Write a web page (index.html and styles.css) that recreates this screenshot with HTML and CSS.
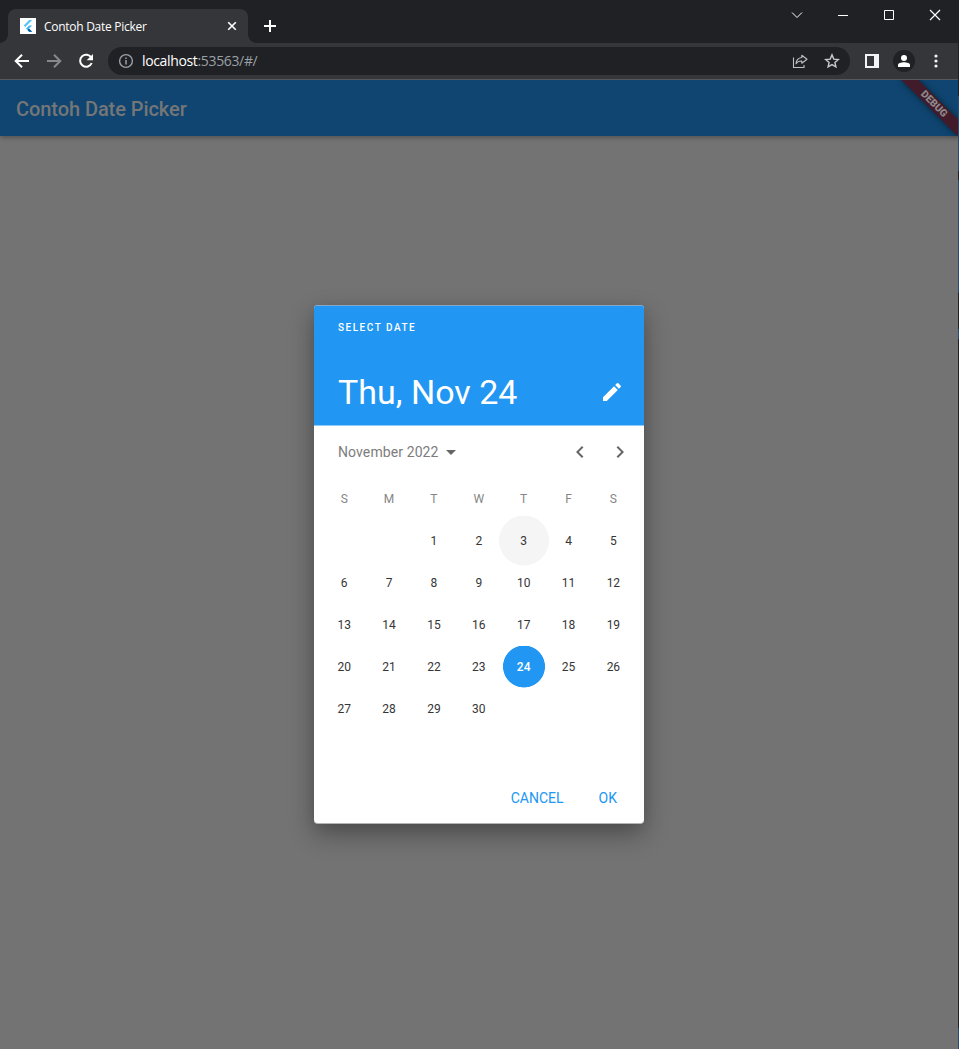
FILE: index.html
```html
<!DOCTYPE html>
<html lang="en">
<head>
<meta charset="utf-8">
<title>Contoh Date Picker</title>
<link rel="stylesheet" href="styles.css">
</head>
<body>
<div class="window">
  <header class="tabstrip">
    <div class="tab">
      <svg class="favicon" width="16" height="16" viewBox="0 0 16 16"><rect width="16" height="16" fill="#fff"/><path d="M9.2 2h3L5.3 9 3.7 7.6z" fill="#54c5f8"/><path d="M9.2 7.4h3L9 10.6l3.2 3.2h-3L6 10.6z" fill="#40b6f5"/><path d="M7.6 12.2 9.1 10.7l3.1 3.1h-3z" fill="#01579b"/></svg>
      <span class="tab-title">Contoh Date Picker</span>
      <svg class="tab-close" width="10" height="10" viewBox="0 0 10 10"><path d="m1.2 1.2 7.6 7.6m0-7.6L1.2 8.8" stroke="#fff" stroke-width="1.6"/></svg>
    </div>
    <svg class="new-tab" width="12" height="12" viewBox="0 0 12 12"><path d="M6 0v12M0 6h12" stroke="#fff" stroke-width="2"/></svg>
    <div class="controls">
      <svg width="46" height="30"><path d="m18 12.500 5 5 5-5" fill="none" stroke="#fff"/></svg>
      <svg width="46" height="30"><path d="M18 15.500h10" stroke="#fff"/></svg>
      <svg width="46" height="30"><path d="M18.500 10.500h9v9h-9z" fill="none" stroke="#fff"/></svg>
      <svg width="46" height="30"><path d="m18 10 10 10m0-10-10 10" stroke="#fff" stroke-width="1.200"/></svg>
    </div>
  </header>
  <nav class="toolbar">
    <svg width="16" height="16" viewBox="0 0 16 16" fill="none" stroke="#fff" stroke-width="2"><path d="M15 8H2.400M8 1.700 1.700 8 8 14.300"/></svg>
    <svg width="16" height="16" viewBox="0 0 16 16" fill="none" stroke="#87888b" stroke-width="2"><path d="M1 8h12.600M8 1.700 14.300 8 8 14.300"/></svg>
    <svg width="16" height="16" viewBox="0 0 16 16"><path d="M13.400 4.900A6 6 0 1 0 13.700 10" fill="none" stroke="#fff" stroke-width="2"/><path d="M15 1v6.300H8.700z" fill="#fff"/></svg>
    <div class="omnibox">
      <svg width="16" height="16" viewBox="0 0 16 16"><circle cx="8" cy="8" r="6.400" fill="none" stroke="#9aa0a6" stroke-width="1.400"/><path d="M8 7v4.500M8 4.500v1.600" stroke="#9aa0a6" stroke-width="1.500"/></svg>
      <span class="url"><b>localhost</b>:53563/#/</span>
      <svg class="share" width="16" height="16" viewBox="0 0 16 16" fill="none" stroke="#bdc1c6" stroke-width="1.100"><path d="M1.500 4.500v10h10.500V12"/><path d="M9.800 2.200 15 6.200l-5.200 4V8C7.500 7.900 5.500 8.500 4 10.700 4.300 7.200 6.300 4.900 9.800 4.500z" stroke-linejoin="round"/></svg>
      <svg width="16" height="16" viewBox="0 0 16 16"><path d="m8 1.900 1.800 4.200 4.500.4-3.400 3 1 4.400L8 11.600l-3.900 2.300 1-4.400-3.400-3 4.500-.4z" fill="none" stroke="#c7cacd" stroke-width="1.400"/></svg>
    </div>
    <svg class="panel" width="14" height="14" viewBox="0 0 14 14"><path d="M1 1h12v12H1z" fill="none" stroke="#f1f3f4" stroke-width="2"/><path d="M9 1h4v12H9z" fill="#f1f3f4"/></svg>
    <div class="avatar"><svg width="12" height="12" viewBox="0 0 12 12" fill="#fff"><circle cx="6" cy="3" r="3"/><path d="M0 12V9.800C0 8.200 3 7.200 6 7.200s6 1 6 2.600V12z"/></svg></div>
    <svg class="more" width="4" height="14" viewBox="0 0 4 14" fill="#f1f3f4"><circle cx="2" cy="2" r="1.600"/><circle cx="2" cy="7" r="1.600"/><circle cx="2" cy="12" r="1.600"/></svg>
  </nav>
  <main class="page">
    <div class="appbar">Contoh Date Picker</div>
    <div class="banner-clip"><div class="banner">DEBUG</div></div>
    <div class="stage">
    <section class="dialog">
      <div class="head">
        <div class="overline">SELECT DATE</div>
        <div class="selected-date"><span>Thu, Nov 24</span>
          <svg width="24" height="24" viewBox="0 0 24 24" fill="#fff"><path d="M3 17.250V21h3.750L17.810 9.940l-3.750-3.750L3 17.250zM20.710 7.040a1 1 0 0 0 0-1.410l-2.340-2.340a1 1 0 0 0-1.410 0l-1.830 1.830 3.750 3.750 1.830-1.830z"/></svg>
        </div>
      </div>
      <div class="month">
        <span>November 2022</span>
        <svg class="caret" width="24" height="24" viewBox="0 0 24 24" fill="#666"><path d="m7 10 5 5 5-5z"/></svg>
        <svg class="prev" width="24" height="24" viewBox="0 0 24 24" fill="#666"><path d="M15.410 7.410 14 6l-6 6 6 6 1.410-1.410L10.830 12z"/></svg>
        <svg width="24" height="24" viewBox="0 0 24 24" fill="#666"><path d="M10 6 8.590 7.410 13.170 12l-4.580 4.590L10 18l6-6z"/></svg>
      </div>
      <div class="grid">
        <i>S</i><i>M</i><i>T</i><i>W</i><i>T</i><i>F</i><i>S</i>
        <span></span><span></span><span>1</span><span>2</span><span class="hover">3</span><span>4</span><span>5</span>
        <span>6</span><span>7</span><span>8</span><span>9</span><span>10</span><span>11</span><span>12</span>
        <span>13</span><span>14</span><span>15</span><span>16</span><span>17</span><span>18</span><span>19</span>
        <span>20</span><span>21</span><span>22</span><span>23</span><span class="picked">24</span><span>25</span><span>26</span>
        <span>27</span><span>28</span><span>29</span><span>30</span>
      </div>
      <div class="actions"><span class="cancel">CANCEL</span><span class="ok">OK</span></div>
    </section>
    </div>
  </main>
  <div class="edge"></div>
</div>
</body>
</html>
```
FILE: styles.css
```css
* { box-sizing: border-box; }
body { margin: 0; background: #737373; }
svg { display: block; flex: none; }
.window { position: relative; display: flex; flex-direction: column; width: 959px; height: 1049px; overflow: hidden; font-family: Roboto, sans-serif; }

.tabstrip { display: flex; height: 43px; background: #202124; font-family: "Open Sans", sans-serif; }
.tab { position: relative; display: flex; align-items: center; width: 240px; height: 34px; margin: 9px 0 0 8px; padding: 0 11px 0 12px; border-radius: 8px 8px 0 0; background: #35363a; color: #fff; font-size: 12px; }
.tab::before, .tab::after { content: ""; position: absolute; bottom: 0; width: 8px; height: 8px; }
.tab::before { left: -8px; background: radial-gradient(circle at 0 0, transparent 7.5px, #35363a 8px); }
.tab::after { right: -8px; background: radial-gradient(circle at 100% 0, transparent 7.5px, #35363a 8px); }
.tab-title { margin-left: 8px; letter-spacing: -0.28px; white-space: nowrap; }
.tab-close { margin-left: auto; }
.new-tab { margin: 20px 0 0 16px; }
.controls { display: flex; margin-left: auto; margin-right: 1px; }

.toolbar { display: flex; align-items: center; height: 37px; padding: 0 0 1px 14px; border-bottom: 1px solid #56585b; background: #35363a; gap: 16px; }
.omnibox { display: flex; align-items: center; width: 742px; height: 28px; margin-left: -2px; padding: 0 10px; border-radius: 14px; background: #202124; }
.url { margin-left: 8px; color: #9aa0a6; font: 14px "Open Sans", sans-serif; letter-spacing: -0.35px; }
.url b { color: #fff; font-weight: 400; }
.share { margin-left: auto; margin-right: 16px; }
.panel { margin-left: -1px; }
.avatar { display: flex; align-items: center; justify-content: center; width: 22px; height: 22px; margin-left: -2px; border-radius: 50%; background: #202124; }
.more { margin-left: 3px; }

.page { position: relative; display: flex; flex-direction: column; flex: 1; width: 958px; overflow: hidden; background: #737373; }
.appbar { flex: none; height: 56px; padding-left: 16px; background: #0f4570; box-shadow: 0 2px 4px -1px rgba(0,0,0,.2), 0 3px 4px rgba(0,0,0,.1); color: #757677; font-size: 20px; font-weight: 500; letter-spacing: -.07px; line-height: 58px; }
.banner-clip { position: absolute; top: 0; right: 0; width: 80px; height: 80px; overflow: hidden; }
.banner { position: absolute; left: 16px; top: 18px; width: 80px; height: 12px; transform: rotate(45deg); background: #421b2a; box-shadow: 0 0 6px rgba(0,0,0,.5); color: #8e888a; font-size: 10.2px; font-weight: 900; line-height: 12px; text-align: center; }
.stage { display: flex; flex: 1; justify-content: center; align-items: flex-start; padding-top: 169px; }

.dialog { display: flex; flex-direction: column; width: 330px; height: 519px; border-bottom: 1px solid #b5b5b5; border-radius: 4px; overflow: hidden; background: #fff; box-shadow: 0 10px 26px rgba(0,0,0,.33), 0 3px 12px rgba(0,0,0,.06); }
.head { height: 121px; padding: 16px 20px 0 24px; border-top: 1px solid #84a9c9; border-bottom: 1px solid #90caf9; background: #2196f3; color: #fff; }
.overline { height: 12px; font-size: 10px; font-weight: 500; line-height: 12px; letter-spacing: 1.5px; }
.selected-date { display: flex; align-items: center; justify-content: space-between; height: 40px; margin-top: 38px; font-size: 34px; line-height: 40px; }
.month { display: flex; align-items: center; height: 52px; padding: 0 12px 0 24px; color: #7d7d7d; font-size: 14px; letter-spacing: .1px; }
.prev { margin-left: auto; margin-right: 16px; }
.grid { display: grid; grid-template-columns: repeat(7, 1fr); grid-auto-rows: 42px; height: 294px; padding: 0 8.2px 0 7.8px; color: #353535; font-size: 12px; text-align: center; line-height: 42px; }
.grid i { color: #858585; font-style: normal; }
.hover { margin: -4px -3px; background: radial-gradient(circle at calc(50% + .5px) calc(50% - .5px), #f5f5f5 24.6px, transparent 25.3px); line-height: 50px; }
.picked { background: radial-gradient(circle at calc(50% + .5px) calc(50% - .5px), #2196f3 20.6px, transparent 21.3px); color: #fff; font-weight: 500; }
.actions { display: flex; justify-content: flex-end; align-items: center; gap: 35px; height: 51px; padding-right: 27px; color: #2196f3; font-size: 14px; font-weight: 400; }
.edge { position: absolute; top: 0; right: 0; width: 1px; height: 1049px; background: linear-gradient(#202124 96px, #214d78 96px 171px, #202124 171px 180px, #214d78 180px 293px, #202124 293px 329px, #214d78 329px 339px, #202124 339px 1028px, #214d78 1028px); }
```
